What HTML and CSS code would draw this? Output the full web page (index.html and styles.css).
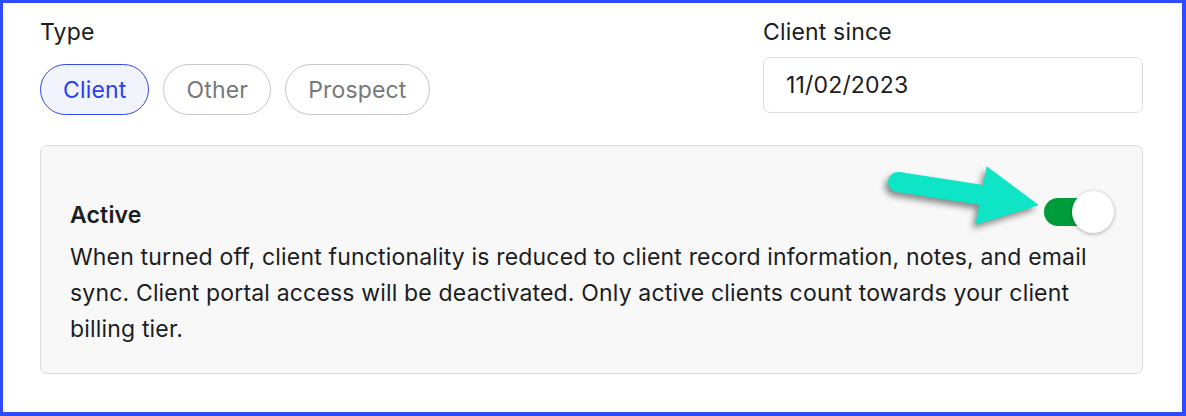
FILE: index.html
```html
<!DOCTYPE html>
<html lang="en">
<head>
    <meta charset="UTF-8">
    <meta name="viewport" content="width=device-width, initial-scale=1.0">
    <title>Client settings</title>
    <link rel="stylesheet" href="styles.css">
</head>
<body>
    <div class="frame">
        <div class="top-row">
            <div class="field">
                <div class="field-label">Type</div>
                <div class="chips">
                    <span class="chip chip-active">Client</span>
                    <span class="chip">Other</span>
                    <span class="chip">Prospect</span>
                </div>
            </div>
            <div class="field">
                <div class="field-label">Client since</div>
                <div class="date-input">11/02/2023</div>
            </div>
        </div>

        <div class="panel">
            <div class="panel-head">
                <div class="panel-title">Active</div>
                <div class="toggle">
                    <span class="toggle-track"></span>
                    <span class="toggle-knob"></span>
                </div>
            </div>
            <p class="panel-text">When turned off, client functionality is reduced to client record information, notes, and email sync. Client portal access will be deactivated. Only active clients count towards your client billing tier.</p>

            <!-- annotation arrow -->
            <svg class="arrow" width="170" height="80" viewBox="0 0 170 80">
                <g fill="#0de5c6" stroke="#0de5c6">
                    <line x1="18" y1="22" x2="108" y2="36" stroke-width="20" stroke-linecap="round"/>
                    <polygon points="107,7 158,45 96,64" stroke-width="1" stroke-linejoin="round"/>
                </g>
            </svg>
        </div>
    </div>
</body>
</html>
```

FILE: styles.css
```css
body
{
    margin: 0;
    font-family: Inter, "Noto Sans", sans-serif;
    color: #1b1d22;
    background: white;
}

.frame
{
    box-sizing: border-box;
    width: 1186px;
    height: 416px;
    border-style: solid;
    border-color: #2f4bff;
    border-width: 3px 4px 4px 3px;
    padding: 11px 39px 0 37px;
    font-size: 23px;
    line-height: 36px;
    letter-spacing: 0.17px;
}

.top-row
{
    display: grid;
    grid-template-columns: 1fr 380px;
}

.field-label
{
    height: 36px;
}

.chips
{
    display: flex;
    gap: 14px;
    margin-top: 14px;
}

.chip
{
    box-sizing: border-box;
    height: 51px;
    padding: 0 22px;
    display: flex;
    align-items: center;
    border: 1px solid #c6c6c6;
    border-radius: 26px;
    color: #787878;
}

.chip-active
{
    border-color: #3346f2;
    background-color: #f1f3fd;
    color: #2b3ff0;
}

.date-input
{
    box-sizing: border-box;
    height: 56px;
    margin-top: 7px;
    padding: 0 22px;
    display: flex;
    align-items: center;
    border: 1px solid #dedede;
    border-radius: 7px;
}

.panel
{
    position: relative;
    margin-top: 30px;
    padding: 45px 28px 26px 29px;
    background-color: #f8f8f8;
    border: 1px solid #dcdcdc;
    border-radius: 7px;
}

.panel-head
{
    display: flex;
    justify-content: space-between;
    align-items: flex-end;
    height: 42px;
}

.panel-title
{
    font-weight: 600;
}

.panel-text
{
    margin: 6px 0 0 0;
}

.toggle
{
    display: flex;
    align-items: center;
}

.toggle-track
{
    width: 56px;
    height: 28px;
    border-radius: 14px;
    background-color: #009c3b;
}

.toggle-knob
{
    width: 42px;
    height: 42px;
    margin-left: -28px;
    border-radius: 50%;
    background-color: white;
    box-shadow: 0 1px 4px rgba(0, 0, 0, 0.3);
}

.arrow
{
    position: absolute;
    left: 839px;
    top: 14px;
    filter: drop-shadow(-3px 4px 3px rgba(0, 0, 0, 0.45));
}
```
